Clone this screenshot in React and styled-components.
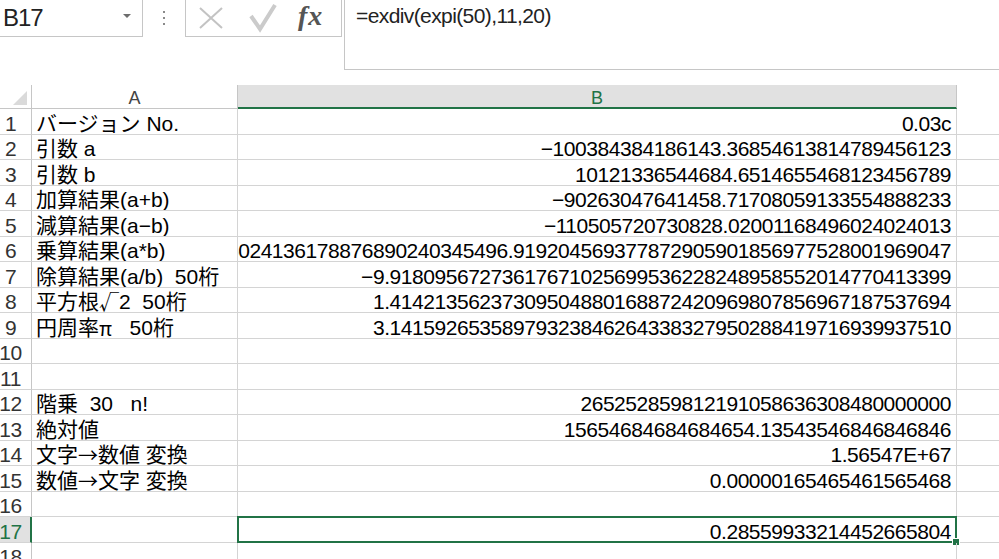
import React from 'react'
import styled, { createGlobalStyle } from 'styled-components'

const GREEN = '#217346'

const rows = [
  { n: 1, a: 'バージョン No.', b: '0.03c' },
  { n: 2, a: '引数 a', b: '−100384384186143.36854613814789456123' },
  { n: 3, a: '引数 b', b: '10121336544684.6514655468123456789' },
  { n: 4, a: '加算結果(a+b)', b: '−90263047641458.71708059133554888233' },
  { n: 5, a: '減算結果(a−b)', b: '−110505720730828.02001168496024024013' },
  { n: 6, a: '乗算結果(a*b)', b: '−1016024136178876890240345496.919204569377872905901856977528001969047' },
  { n: 7, a: '除算結果(a/b)  50桁', b: '−9.91809567273617671025699536228248958552014770413399' },
  { n: 8, a: '平方根√2  50桁', b: '1.41421356237309504880168872420969807856967187537694' },
  { n: 9, a: '円周率π   50桁', b: '3.14159265358979323846264338327950288419716939937510' },
  { n: 10, a: '', b: '' },
  { n: 11, a: '', b: '' },
  { n: 12, a: '階乗  30   n!', b: '265252859812191058636308480000000' },
  { n: 13, a: '絶対値', b: '15654684684684654.13543546846846846' },
  { n: 14, a: '文字→数値 変換', b: '1.56547E+67' },
  { n: 15, a: '数値→文字 変換', b: '0.00000165465461565468' },
  { n: 16, a: '', b: '' },
  { n: 17, a: '', b: '0.28559933214452665804', selected: true },
  { n: 18, a: '', b: '' },
]

// arrows, root and pi come from the CJK face so they keep full width
const label = text =>
  text.split(/([→√π])/).map((part, i) =>
    /^[→√π]$/.test(part) ? <Sym key={i}>{part}</Sym> : part
  )

export default function App() {
  return (
    <Page>
      <GlobalStyle />
      <TopBar>
        <Tools>
          <NameBox>
            <span>B17</span>
            <DropArrow />
          </NameBox>
          <Grip>
            <i /><i /><i />
          </Grip>
          <ButtonBox>
            <svg width="26" height="24" viewBox="0 0 26 24">
              <path d="M2 2 L24 22 M24 2 L2 22" stroke="#c3c3c3" strokeWidth="2" fill="none" />
            </svg>
            <svg width="30" height="30" viewBox="0 0 30 30">
              <path d="M3 13 L12 26 L27 2" stroke="#cbcbcb" strokeWidth="4" fill="none" strokeLinejoin="miter" />
            </svg>
            <Fx>fx</Fx>
          </ButtonBox>
        </Tools>
        <FormulaInput>=exdiv(expi(50),11,20)</FormulaInput>
      </TopBar>

      <Sheet>
        <HeadRow>
          <Corner>
            <svg width="14" height="14" viewBox="0 0 14 14">
              <polygon points="14,0 14,14 0,14" fill="#dadada" />
            </svg>
          </Corner>
          <ColHead>A</ColHead>
          <ColHead $active>B</ColHead>
          <HeadFill />
        </HeadRow>
        {rows.map(r => (
          <Row key={r.n}>
            <RowHead $active={r.selected}>{r.n}</RowHead>
            <LabelCell>{label(r.a)}</LabelCell>
            <ValueCell $selected={r.selected}>
              <span>{r.b}</span>
              {r.selected && (
                <Selection>
                  <FillHandle />
                </Selection>
              )}
            </ValueCell>
            <EmptyCell />
          </Row>
        ))}
      </Sheet>
    </Page>
  )
}

const GlobalStyle = createGlobalStyle`
  html, body {
    margin: 0;
    padding: 0;
    background: #fff;
  }
  body {
    font-family: "Liberation Sans", "Noto Sans CJK JP", sans-serif;
  }
`

const Page = styled.div`
  width: 999px;
  height: 559px;
  overflow: hidden;
  background: #fff;
  color: #000;
`

const TopBar = styled.div`
  display: flex;
  height: 70px;
`

const Tools = styled.div`
  width: 344px;
  display: flex;
  align-items: flex-start;
`

const NameBox = styled.div`
  width: 143px;
  height: 37px;
  box-sizing: border-box;
  border-right: 1px solid #c6c6c6;
  border-bottom: 1px solid #c6c6c6;
  display: flex;
  align-items: center;
  justify-content: space-between;
  padding: 0 11px 0 3px;
  font-size: 24px;
  letter-spacing: -1px;
  color: #222;
`

const DropArrow = styled.div`
  width: 0;
  height: 0;
  border-left: 4px solid transparent;
  border-right: 4px solid transparent;
  border-top: 4px solid #6d6d6d;
  margin-top: -4px;
`

const Grip = styled.div`
  width: 42px;
  height: 36px;
  display: flex;
  flex-direction: column;
  align-items: center;
  justify-content: center;
  gap: 4px;
  i {
    display: block;
    width: 2px;
    height: 2px;
    background: #8a8a8a;
  }
`

const ButtonBox = styled.div`
  width: 157px;
  height: 37px;
  box-sizing: border-box;
  border: 1px solid #c6c6c6;
  border-top: none;
  display: flex;
  align-items: center;
  padding: 0 10px 0 12px;
  svg:first-child {
    margin-right: 24px;
  }
  svg:nth-child(2) {
    margin-right: 20px;
  }
`

const Fx = styled.span`
  font-family: "Liberation Serif", serif;
  font-style: italic;
  font-weight: bold;
  font-size: 28px;
  color: #555;
  letter-spacing: 1px;
  margin-top: -4px;
`

const FormulaInput = styled.div`
  flex: 1;
  height: 70px;
  box-sizing: border-box;
  border-left: 1px solid #c6c6c6;
  border-bottom: 1px solid #c6c6c6;
  padding: 4px 0 0 11px;
  font-size: 21px;
  line-height: 24px;
  letter-spacing: -0.6px;
  color: #222;
`

const Sheet = styled.div`
  margin-top: 15px;
`

const HeadRow = styled.div`
  display: grid;
  grid-template-columns: 32px 206px 719px 1fr;
  height: 24px;
`

const Corner = styled.div`
  box-sizing: border-box;
  border-right: 1px solid #c6c6c6;
  border-bottom: 1px solid #c6c6c6;
  display: flex;
  align-items: flex-end;
  justify-content: flex-end;
  padding: 0 4px 3px 0;
`

const ColHead = styled.div`
  box-sizing: border-box;
  border-right: 1px solid #c6c6c6;
  border-bottom: ${p => (p.$active ? `2px solid ${GREEN}` : '1px solid #c6c6c6')};
  background: ${p => (p.$active ? '#e1e1e1' : '#fff')};
  color: ${p => (p.$active ? GREEN : '#444')};
  display: flex;
  align-items: flex-end;
  justify-content: center;
  padding-bottom: ${p => (p.$active ? '0' : '1px')};
  font-size: 18px;
  line-height: 18px;
`

const HeadFill = styled.div``

const Row = styled.div`
  display: grid;
  grid-template-columns: 32px 206px 719px 1fr;
  height: 25.5px;
`

const RowHead = styled.div`
  box-sizing: border-box;
  border-bottom: 1px solid #d4d4d4;
  border-right: ${p => (p.$active ? `2px solid ${GREEN}` : '1px solid #c6c6c6')};
  background: ${p => (p.$active ? '#e1e1e1' : '#fff')};
  color: ${p => (p.$active ? GREEN : '#333')};
  display: flex;
  align-items: flex-end;
  justify-content: center;
  padding-right: ${p => (p.$active ? '9px' : '10px')};
  font-size: 21px;
  line-height: 20px;
  letter-spacing: -0.5px;
  overflow: hidden;
`

const LabelCell = styled.div`
  box-sizing: border-box;
  border-bottom: 1px solid #d4d4d4;
  border-right: 1px solid #d4d4d4;
  display: flex;
  align-items: flex-end;
  padding-left: 4px;
  font-size: 21px;
  line-height: 20px;
  letter-spacing: 0;
  white-space: pre;
  overflow: hidden;
`

const Sym = styled.span`
  font-family: "Noto Sans CJK JP", sans-serif;
  font-size: 20px;
`

const ValueCell = styled.div`
  position: relative;
  box-sizing: border-box;
  border-bottom: 1px solid #d4d4d4;
  border-right: 1px solid #d4d4d4;
  display: flex;
  align-items: flex-end;
  justify-content: flex-end;
  padding-right: 5px;
  font-size: 21px;
  line-height: 20px;
  letter-spacing: -0.45px;
  white-space: nowrap;
  overflow: ${p => (p.$selected ? 'visible' : 'hidden')};
  span {
    flex-shrink: 0;
  }
`

const EmptyCell = styled.div`
  box-sizing: border-box;
  border-bottom: 1px solid #d4d4d4;
`

const Selection = styled.div`
  position: absolute;
  top: -1px;
  left: -1px;
  right: -1px;
  bottom: -1px;
  border: 2px solid ${GREEN};
  pointer-events: none;
`

const FillHandle = styled.div`
  position: absolute;
  right: -5px;
  bottom: -5px;
  width: 6px;
  height: 6px;
  background: ${GREEN};
  border: 1px solid #fff;
`
